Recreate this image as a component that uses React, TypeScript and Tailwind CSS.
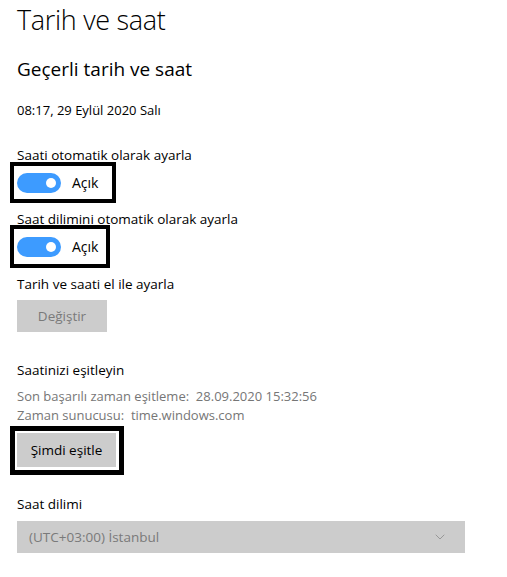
import React from "react";
import { ChevronDown } from "lucide-react";

const font = { fontFamily: '"Open Sans", "Noto Sans", sans-serif' };

const Toggle: React.FC<{ label: string; wide?: boolean; tall?: boolean }> = ({ label, wide, tall }) => (
  <div
    className={`flex items-center border-[4px] border-black pl-[3px] ${wide ? "w-[106px]" : "w-[100px]"} ${
      tall ? "h-[43px]" : "h-[41px]"
    }`}
  >
    <div className="w-[44px] h-[20px] rounded-full bg-[#3d9bff] flex items-center justify-end pr-[5px]">
      <div className="w-[10px] h-[10px] rounded-full bg-white" />
    </div>
    <span className="ml-[11px] text-[14px] text-black">{label}</span>
  </div>
);

export default function App() {
  return (
    <div className="w-[507px] h-[577px] bg-white text-black pl-[17px]" style={font}>
      <h1 className="text-[27px] font-light leading-[40px] tracking-[-0.3px]">Tarih ve saat</h1>
      <h2 className="text-[19px] leading-[28px] mt-[15px]">Geçerli tarih ve saat</h2>
      <p className="text-[13px] leading-[20px] mt-[17px]">08:17, 29 Eylül 2020 Salı</p>

      <p className="text-[13.5px] leading-[20px] mt-[25px]">Saati otomatik olarak ayarla</p>
      <div className="-ml-[7px] -mt-[3px]">
        <Toggle label="Açık" wide />
      </div>

      <p className="text-[13.5px] leading-[20px] mt-[6px]">Saat dilimini otomatik olarak ayarla</p>
      <div className="-ml-[7px] -mt-[4px]">
        <Toggle label="Açık" tall />
      </div>

      <p className="text-[13.5px] leading-[20px] mt-[6px]">Tarih ve saati el ile ayarla</p>
      <div className="mt-[6px] w-[90px] h-[32px] bg-[#cccccc] text-[#7a7a7a] text-[13.5px] flex items-center justify-center">
        Değiştir
      </div>

      <p className="text-[13.5px] leading-[20px] mt-[28px]">Saatinizi eşitleyin</p>
      <div className="mt-[7px] text-[13px] leading-[19px] text-[#767676]">
        <p>Son başarılı zaman eşitleme:&nbsp; 28.09.2020 15:32:56</p>
        <p>Zaman sunucusu:&nbsp; time.windows.com</p>
      </div>

      <div className="-ml-[7px] mt-[1px] w-[114px] h-[49px] border-[5px] border-black pl-[2px] pt-[2px]">
        <div className="w-[99px] h-[34px] bg-[#cccccc] text-[13.5px] flex items-center justify-center">
          Şimdi eşitle
        </div>
      </div>

      <p className="text-[13.5px] leading-[20px] mt-[19px]">Saat dilimi</p>
      <div className="mt-[7px] w-[448px] h-[32px] bg-[#cccccc] text-[#7a7a7a] text-[13.5px] flex items-center justify-between pl-[12px] pr-[17px]">
        <span>(UTC+03:00) İstanbul</span>
        <ChevronDown className="w-[16px] h-[16px] text-[#8a8a8a]" strokeWidth={1.2} />
      </div>
    </div>
  );
}
